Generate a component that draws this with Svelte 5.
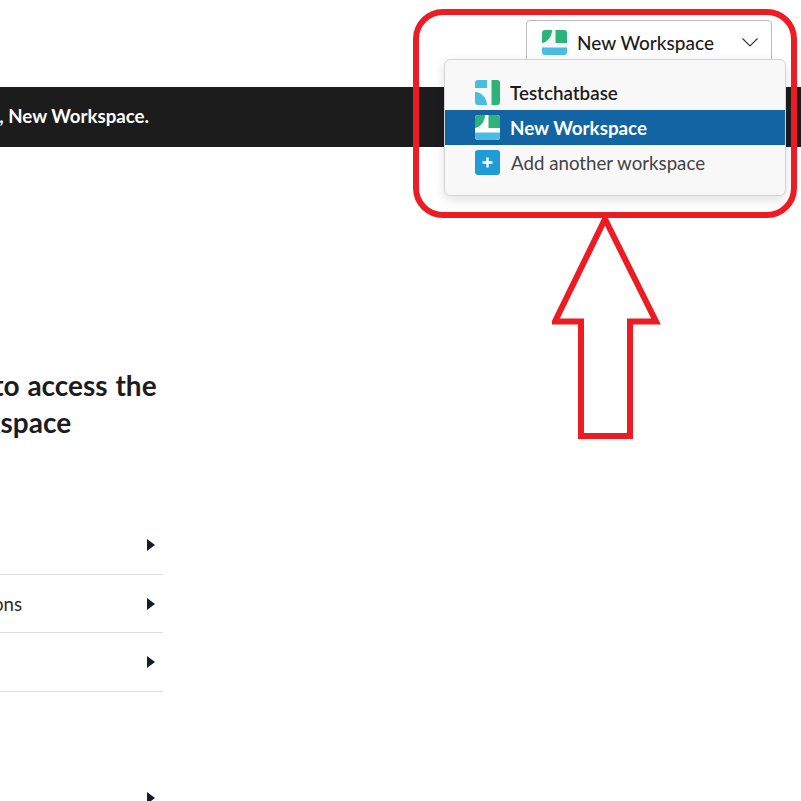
<script lang="ts">
	const rows = [
		{ label: '' },
		{ label: 'Permissions' },
		{ label: '' }
	];
</script>

{#snippet newIcon(bg: string)}
	<svg class="ws-icon" viewBox="0 0 25 25" width="25" height="25">
		<rect width="25" height="25" rx="3" fill={bg} />
		<path d="M3 0H10C10 6 6 12 0 13V3A3 3 0 0 1 3 0Z" fill="#2bb37a" />
		<path d="M13.500 0H22A3 3 0 0 1 25 3V13H13.500Z" fill="#2bb37a" />
		<path d="M0 17.500H25V22A3 3 0 0 1 22 25H3A3 3 0 0 1 0 22Z" fill="#47bde2" />
	</svg>
{/snippet}

<div class="page">
	<header class="top">
		<button class="switcher">
			{@render newIcon('#f6f6f6')}
			<span class="switcher-name">New Workspace</span>
			<svg class="chevron" viewBox="0 0 16 9" width="16" height="9">
				<path d="M0.500 0.500L8 8L15.500 0.500" fill="none" stroke="#3a3a3a" stroke-width="1.200" />
			</svg>
		</button>
	</header>

	<div class="banner">
		<span>Welcome, New Workspace.</span>
	</div>

	<main class="content">
		<h1>Join now to access the<br />your workspace</h1>

		<ul class="list">
			{#each rows as row}
				<li>
					<span>{row.label}</span>
					<i class="tri"></i>
				</li>
			{/each}
		</ul>

		<div class="lower">
			<i class="tri"></i>
		</div>
	</main>

	<div class="menu">
		<div class="item">
			<svg class="ws-icon" viewBox="0 0 25 25" width="25" height="25">
				<path d="M3 0H12V8H0V3A3 3 0 0 1 3 0Z" fill="#47bde2" />
				<path d="M0 12C6 12 12 18 12 25H3A3 3 0 0 1 0 22Z" fill="#47bde2" />
				<path d="M16.500 0H22A3 3 0 0 1 25 3V22A3 3 0 0 1 22 25H16.500Z" fill="#2bb37a" />
			</svg>
			<span class="strong">Testchatbase</span>
		</div>
		<div class="item selected">
			{@render newIcon('#ffffff')}
			<span class="strong">New Workspace</span>
		</div>
		<div class="item">
			<span class="plus">
				<svg viewBox="0 0 11 11" width="11" height="11">
					<path d="M5.500 0.500V10.500M0.500 5.500H10.500" stroke="#fff" stroke-width="2.400" />
				</svg>
			</span>
			<span class="muted">Add another workspace</span>
		</div>
	</div>

	<!-- red annotation drawn over the page -->
	<div class="frame"></div>
	<svg class="arrow" viewBox="0 0 110 226" width="110" height="226">
		<path d="M53 5L104 107.500H78V222H29V107.500H3Z" fill="none" stroke="#ed1c24" stroke-width="6" />
	</svg>
</div>

<style>
	:global(body) {
		margin: 0;
		background: #fff;
	}

	.page {
		position: relative;
		width: 801px;
		height: 801px;
		overflow: hidden;
		font-family: Lato, sans-serif;
		color: #1d1c1d;
	}

	.top {
		display: flex;
		justify-content: flex-end;
		height: 87px;
		padding: 20px 29px 0 0;
		box-sizing: border-box;
	}

	.switcher {
		display: flex;
		align-items: center;
		width: 246px;
		height: 45px;
		padding: 0 13px 0 15px;
		box-sizing: border-box;
		background: #fff;
		border: 1px solid #bbbabb;
		border-radius: 4px;
		font: inherit;
		font-size: 19px;
		font-weight: 500;
		color: #1d1c1d;
		align-self: flex-start;
	}

	.switcher-name {
		margin-left: 10px;
		flex: 1;
		text-align: left;
	}

	.ws-icon {
		flex: none;
		display: block;
	}

	.banner {
		height: 60px;
		display: flex;
		align-items: center;
		background: #1c1c1c;
		color: #fff;
		font-size: 18.700px;
		font-weight: 700;
		white-space: nowrap;
	}

	.banner span {
		margin-left: -79px;
		margin-top: -2px;
	}

	.content {
		width: 563px;
		margin-left: -400px;
	}

	h1 {
		margin: 220px 0 0;
		padding-left: 273.500px;
		font-size: 28px;
		font-weight: 700;
		line-height: 37px;
		word-spacing: 1px;
		white-space: nowrap;
	}

	.list {
		list-style: none;
		margin: 75.400px 0 0;
		padding: 0;
	}

	.list li {
		display: flex;
		align-items: center;
		justify-content: space-between;
		height: 57.500px;
		padding: 0 8px 0 325px;
		border-bottom: 1px solid #dddddd;
		font-size: 18.700px;
		color: #2c2c2c;
	}

	.tri {
		display: block;
		width: 0;
		height: 0;
		border-left: 8px solid #121c2a;
		border-top: 6px solid transparent;
		border-bottom: 6px solid transparent;
	}

	.lower {
		display: flex;
		justify-content: flex-end;
		align-items: center;
		height: 58px;
		margin-top: 77px;
		padding-right: 8px;
	}

	.menu {
		position: absolute;
		left: 444px;
		top: 59px;
		width: 342px;
		height: 137px;
		padding-top: 15px;
		box-sizing: border-box;
		background: #f8f8f8;
		border: 1px solid #d4d4d4;
		border-radius: 6px;
		box-shadow: 0 4px 12px rgba(0, 0, 0, 0.12);
	}

	.item {
		display: flex;
		align-items: center;
		gap: 10px;
		height: 35px;
		padding-left: 30px;
		font-size: 18.800px;
	}

	.strong {
		font-weight: 600;
	}

	.selected {
		background: #1264a3;
		color: #fff;
	}

	.selected .strong {
		font-weight: 700;
	}

	.muted {
		color: #454245;
		margin-left: 1px;
		font-size: 18.700px;
	}

	.plus {
		display: flex;
		align-items: center;
		justify-content: center;
		width: 25px;
		height: 25px;
		border-radius: 3px;
		background: #1f9bd8;
	}

	.frame {
		position: absolute;
		left: 413px;
		top: 9px;
		width: 384px;
		height: 209px;
		box-sizing: border-box;
		border: 6px solid #ed1c24;
		border-radius: 30px;
	}

	.arrow {
		position: absolute;
		left: 552px;
		top: 214px;
	}
</style>
